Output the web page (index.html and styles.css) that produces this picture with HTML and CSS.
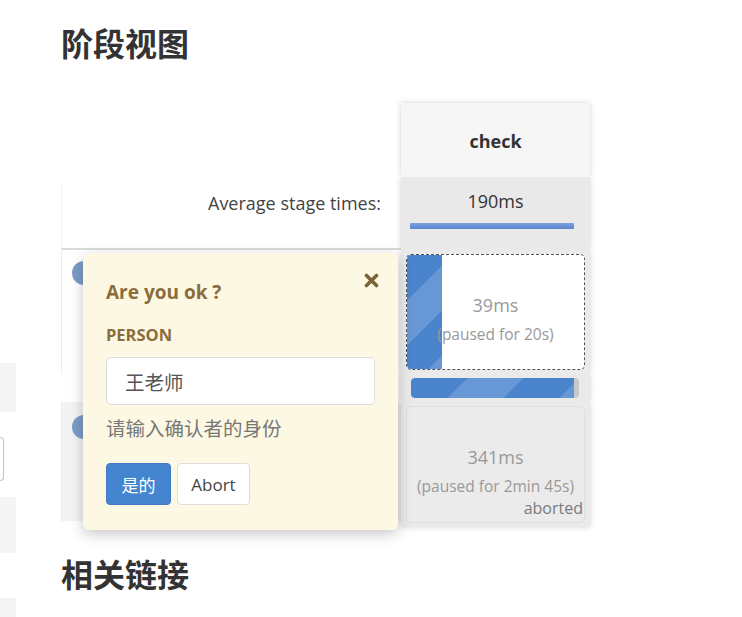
FILE: index.html
```html
<!DOCTYPE html>
<html lang="zh">
<head>
    <meta charset="UTF-8">
    <title>阶段视图</title>
    <link rel="stylesheet" href="styles.css">
</head>
<body>
    <div class="page">
        <aside class="side">
            <div class="side-block first"></div>
            <div class="side-box"></div>
            <div class="side-block second"></div>
            <div class="side-block third"></div>
        </aside>

        <main class="main">
            <h2 class="section-title">阶段视图</h2>

            <div class="stage-view">
                <!-- header row -->
                <div class="label-cell empty"></div>
                <div class="stage-header">check</div>

                <!-- averages -->
                <div class="label-cell avg-label">Average stage times:</div>
                <div class="stage-avg">
                    <span>190ms</span>
                    <div class="avg-bar"></div>
                </div>

                <!-- build row 1 -->
                <div class="label-cell build-row"><span class="badge"></span></div>
                <div class="stage-cell-wrap">
                    <div class="stage-cell paused">
                        <div class="paused-fill"></div>
                        <span class="duration">39ms</span>
                        <span class="pause-note">(paused for 20s)</span>
                    </div>
                </div>

                <!-- gap row with progress -->
                <div class="label-cell gap"></div>
                <div class="progress-wrap">
                    <div class="progress"><div class="progress-bar"></div></div>
                </div>

                <!-- build row 2 -->
                <div class="label-cell build-row alt"><span class="badge"></span></div>
                <div class="stage-cell-wrap last">
                    <div class="stage-cell aborted">
                        <span class="duration">341ms</span>
                        <span class="pause-note">(paused for 2min 45s)</span>
                        <span class="status">aborted</span>
                    </div>
                </div>

                <div class="popover">
                    <button class="close" aria-label="close">
                        <svg width="15" height="15" viewBox="0 0 15 15">
                            <path d="M2.5 2.5 L12.5 12.5 M12.5 2.5 L2.5 12.5" stroke="#7b6338" stroke-width="3.6" stroke-linecap="round"/>
                        </svg>
                    </button>
                    <h3 class="popover-title">Are you ok ?</h3>
                    <label class="field-label">PERSON</label>
                    <input class="field-input" type="text" value="王老师">
                    <p class="help">请输入确认者的身份</p>
                    <div class="actions">
                        <button class="btn btn-primary">是的</button>
                        <button class="btn btn-default">Abort</button>
                    </div>
                </div>
            </div>

            <h2 class="section-title links">相关链接</h2>
        </main>
    </div>
</body>
</html>
```

FILE: styles.css
```css
* {
    margin: 0;
    padding: 0;
    box-sizing: border-box;
}

body {
    background: #fff;
    font-family: "Open Sans", "Noto Sans CJK SC", sans-serif;
    color: #333;
}

.page {
    display: flex;
    height: 617px;
    overflow: hidden;
}

/* bits of the left side panel */
.side {
    width: 16px;
    flex-shrink: 0;
    padding-top: 363px;
    display: flex;
    flex-direction: column;
}
.side > div {
    flex-shrink: 0;
}
.side-block {
    background: #f4f4f4;
}
.side-block.first {
    height: 49px;
}
.side-box {
    height: 44px;
    width: 4px;
    margin-top: 25px;
    border: 1px solid #c4c4c4;
    border-left: none;
    border-radius: 0 4px 4px 0;
}
.side-block.second {
    height: 56px;
    margin-top: 16px;
}
.side-block.third {
    height: 40px;
    margin-top: 45px;
}

.main {
    margin-left: 45px;
    width: 560px;
}

.section-title {
    font-family: "Noto Sans CJK SC", sans-serif;
    font-size: 32px;
    font-weight: 700;
    line-height: 38px;
    color: #333;
    margin-top: 23px;
}
.section-title.links {
    margin-top: 27px;
}

/* stage grid */
.stage-view {
    position: relative;
    margin-top: 42px;
    display: grid;
    grid-template-columns: 340px 189px;
    grid-template-rows: 74px 73px 124px 28px 125px;
}

.label-cell {
    background: #fff;
}
.avg-label {
    margin-top: 6px;
    border-left: 1px solid #f2f2f2;
    border-bottom: 2px solid #dadada;
    text-align: right;
    padding: 7px 20px 0 0;
    font-size: 18px;
    line-height: 26px;
    color: #444;
}
.build-row {
    border-left: 1px solid #ececec;
    padding: 11px 0 0 10px;
}
.build-row.alt {
    background: #f3f3f3;
    padding-top: 13px;
    margin-bottom: 6px;
}
.badge {
    display: block;
    width: 24px;
    height: 24px;
    border-radius: 50%;
    background: #7b9dc8;
}

.stage-header,
.stage-avg,
.stage-cell-wrap,
.progress-wrap {
    box-shadow: 0 0 6px rgba(0, 0, 0, 0.18);
    clip-path: inset(0 -8px);
}
.stage-header {
    clip-path: inset(-8px -8px 0 -8px);
    background: #f6f6f6;
    display: flex;
    align-items: center;
    justify-content: center;
    font-size: 18px;
    font-weight: 700;
    color: #333;
    padding-top: 2px;
}
.stage-avg {
    background: #e9e9e9;
    display: flex;
    flex-direction: column;
    align-items: center;
    padding-top: 11px;
    font-size: 18px;
    line-height: 26px;
    color: #333;
}
.avg-bar {
    align-self: stretch;
    height: 6px;
    margin: 9px 16px 0 9px;
    border-radius: 1px;
    background: linear-gradient(#7d9ee0, #5d84d0);
}

.stage-cell-wrap {
    background: #eaeaea;
    padding: 4px 5px 4px 5px;
}
.stage-cell-wrap.last {
    clip-path: inset(0 -8px -8px -8px);
}
.stage-cell {
    position: relative;
    height: 100%;
    border-radius: 5px;
    display: flex;
    flex-direction: column;
    align-items: center;
    justify-content: center;
    color: #999;
    overflow: hidden;
}
.stage-cell.paused {
    background: #fff;
    border: 1px dashed #555;
    padding-top: 13px;
}
.stage-cell.aborted {
    background: #ebebeb;
    border: 1px solid #dedede;
    padding-top: 34px;
}
.paused-fill {
    position: absolute;
    left: 0;
    top: 0;
    bottom: 0;
    width: 35px;
    background-color: #4a84cd;
    background-image: linear-gradient(-45deg, rgba(255, 255, 255, 0.16) 25%, transparent 25%, transparent 50%, rgba(255, 255, 255, 0.16) 50%, rgba(255, 255, 255, 0.16) 75%, transparent 75%);
    background-size: 90px 90px;
}
.duration {
    position: relative;
    font-size: 18px;
    line-height: 26px;
}
.pause-note {
    position: relative;
    font-size: 15.5px;
    line-height: 22px;
    margin-top: 5px;
}
.status {
    align-self: flex-end;
    font-size: 16px;
    line-height: 22px;
    color: #7a7a7a;
    margin-right: 1px;
}

.progress-wrap {
    background: #eaeaea;
    padding: 4px 11px 4px 10px;
}
.progress {
    height: 20px;
    border-radius: 4px;
    background: #c8c8c8;
    overflow: hidden;
}
.progress-bar {
    width: 97%;
    height: 100%;
    border-radius: 4px 0 0 4px;
    background-color: #4a84cd;
    background-image: linear-gradient(-45deg, rgba(255, 255, 255, 0.16) 25%, transparent 25%, transparent 50%, rgba(255, 255, 255, 0.16) 50%, rgba(255, 255, 255, 0.16) 75%, transparent 75%);
    background-size: 112px 112px;
}

/* input popover */
.popover {
    position: absolute;
    left: 22px;
    top: 150px;
    width: 315px;
    height: 277px;
    padding: 25px 22px 0 23px;
    background: #fcf8e3;
    border-radius: 6px;
    box-shadow: 0 4px 14px rgba(0, 0, 0, 0.22);
    color: #8a6d3b;
}
.close {
    position: absolute;
    top: 20px;
    right: 19px;
    border: none;
    background: none;
    line-height: 0;
}
.popover-title {
    font-size: 19px;
    font-weight: 700;
    line-height: 28px;
}
.field-label {
    display: block;
    margin-top: 18px;
    font-size: 16.5px;
    font-weight: 700;
    line-height: 22px;
}
.field-input {
    display: block;
    width: 269px;
    height: 48px;
    margin-top: 11px;
    padding: 0 18px;
    border: 1px solid #dcdcdc;
    border-radius: 5px;
    background: #fff;
    font-family: "Noto Sans CJK SC", sans-serif;
    font-size: 19.5px;
    color: #555;
}
.help {
    margin-top: 9px;
    font-family: "Noto Sans CJK SC", sans-serif;
    font-size: 19.5px;
    line-height: 28px;
    color: #777;
}
.actions {
    display: flex;
    gap: 6px;
    margin-top: 21px;
}
.btn {
    height: 42px;
    border-radius: 4px;
    font-family: "Open Sans", "Noto Sans CJK SC", sans-serif;
    font-size: 17px;
}
.btn-primary {
    width: 65px;
    background: #4585cf;
    border: 1px solid #3d7bc4;
    color: #fff;
}
.btn-default {
    width: 73px;
    background: #fff;
    border: 1px solid #ddd;
    color: #444;
}
```
